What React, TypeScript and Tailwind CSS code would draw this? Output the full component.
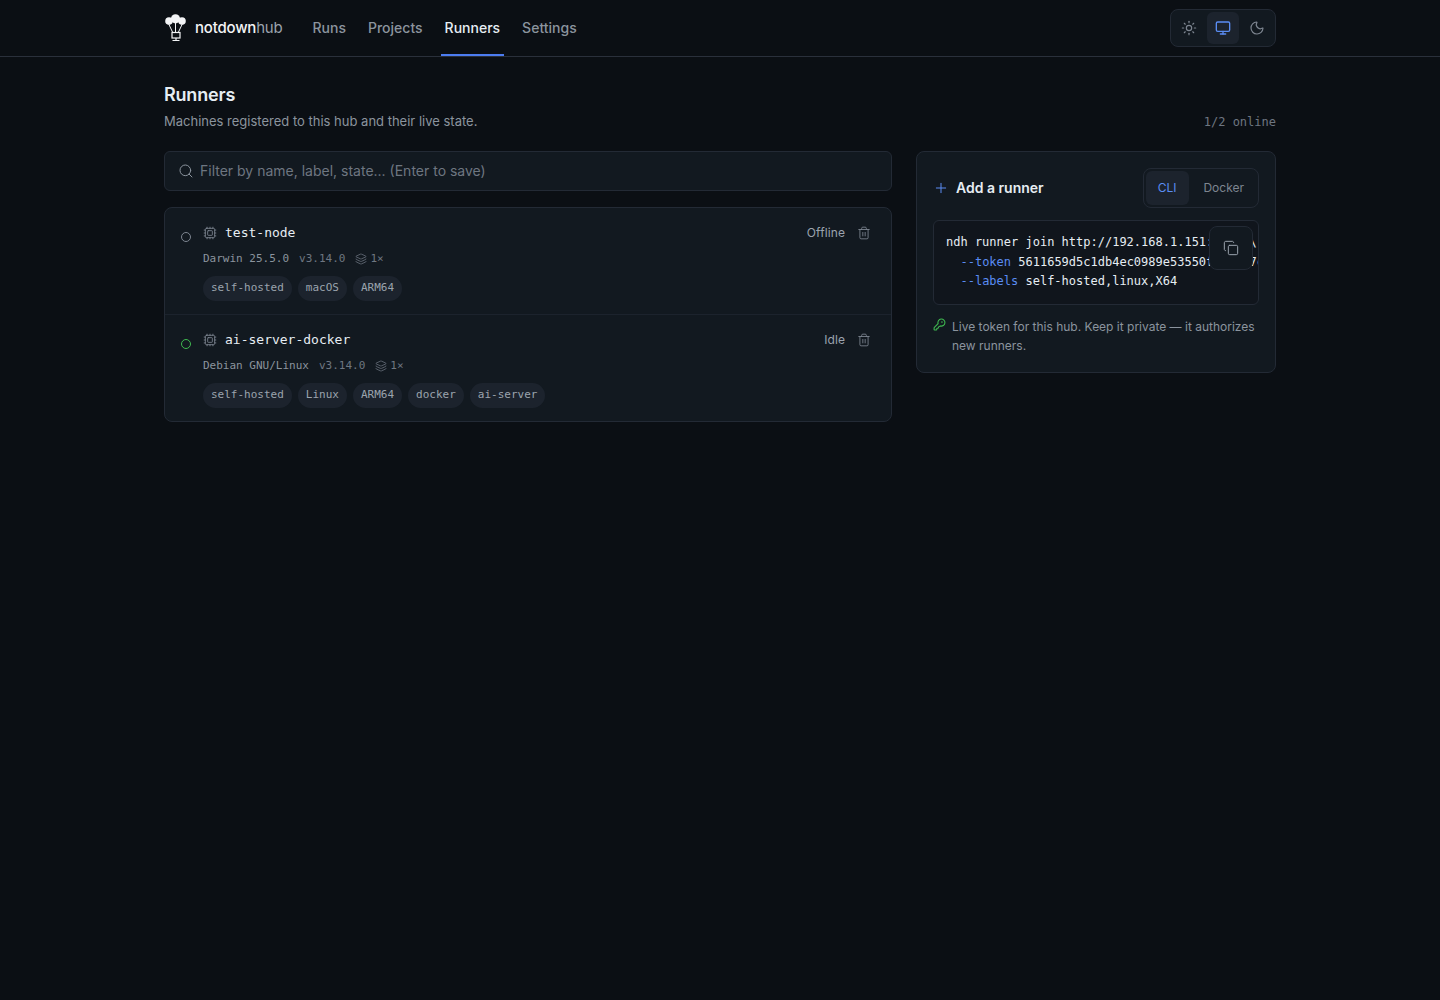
import { Copy, Cpu, KeyRound, Layers, Monitor, Moon, Plus, Search, Sun, Trash2 } from "lucide-react";

const mono = "font-['DejaVu_Sans_Mono','Liberation_Mono',monospace]";

const runners = [
  { name: "test-node", os: "Darwin 25.5.0", state: "Offline", online: false, labels: ["self-hosted", "macOS", "ARM64"] },
  { name: "ai-server-docker", os: "Debian GNU/Linux", state: "Idle", online: true, labels: ["self-hosted", "Linux", "ARM64", "docker", "ai-server"] },
];

function Logo() {
  return (
    <svg width="24" height="28" viewBox="0 0 24 28" fill="none">
      <path d="M4.5 9.5L8.5 18M11.5 8v10M18.5 9.5L14.5 18" stroke="#f3f4f6" strokeWidth="1" />
      <circle cx="5" cy="7" r="3.8" fill="#f3f4f6" />
      <circle cx="11.5" cy="4.8" r="4.6" fill="#f3f4f6" />
      <circle cx="18" cy="7" r="3.8" fill="#f3f4f6" />
      <rect x="8" y="18.5" width="8" height="5.5" stroke="#f3f4f6" strokeWidth="1.2" />
      <path d="M12 24v2M8.5 26.5h7" stroke="#f3f4f6" strokeWidth="1.2" />
    </svg>
  );
}

function RunnerRow({ runner }: { runner: (typeof runners)[number] }) {
  return (
    <div className="flex h-[107px] border-b border-[#1c232d] pl-4 pr-5 pt-4 last:h-[106px] last:border-b-0">
      <div className={`mr-3 mt-2 size-[10px] shrink-0 rounded-full border ${runner.online ? "border-[#3fb950]" : "border-[#7d8590]"}`} />
      <div className="min-w-0 flex-1">
        <div className="flex h-[17px] items-center justify-between">
          <div className="flex items-center gap-2">
            <Cpu size={14} strokeWidth={1.5} className="text-[#7d8590]" />
            <span className={`${mono} text-[13px] font-medium text-[#e6edf3]`}>{runner.name}</span>
          </div>
          <div className="flex items-center gap-3">
            <span className="text-xs tracking-[0.1px] text-[#9ba3ae]">{runner.state}</span>
            <Trash2 size={14} strokeWidth={1.5} className="text-[#7d8590]" />
          </div>
        </div>
        <div className={`${mono} mt-[10px] flex h-4 items-center text-[11px]`}>
          <span className="text-[#8b949e]">{runner.os}</span>
          <span className="ml-[10px] text-[#6e7681]">v3.14.0</span>
          <span className="ml-[10px] flex items-center gap-[3px] text-[#6e7681]">
            <Layers size={12} strokeWidth={1.5} />
            1×
          </span>
        </div>
        <div className="mt-[9px] flex gap-[6px]">
          {runner.labels.map((label) => (
            <span key={label} className={`${mono} flex h-[25px] items-center rounded-full bg-[#1c232d] px-2 text-[11px] text-[#9ba3ae]`}>
              {label}
            </span>
          ))}
        </div>
      </div>
    </div>
  );
}

export default function App() {
  return (
    <div className="min-h-[1000px] bg-[#0b0f14] font-['Inter',sans-serif] text-[#e6edf3] antialiased">
      <header className="h-[57px] border-b border-[#2a303b]">
        <div className="mx-auto flex h-[56px] w-[1112px] items-center justify-between">
          <div className="flex h-full items-center">
            <div className="flex items-center gap-[7px]">
              <Logo />
              <span className="text-[15px] font-medium tracking-[-0.2px] text-[#f3f4f6]">
                notdown<span className="font-normal text-[#9ba3ae]">hub</span>
              </span>
            </div>
            <nav className="ml-[26px] flex h-full gap-[14px] text-sm font-medium text-[#8b949e]">
              <a className="flex items-center px-1">Runs</a>
              <a className="flex items-center px-1">Projects</a>
              <a className="flex items-center border-y-2 border-t-transparent border-b-[#4c7cf0] px-1 text-[#e6edf3]">Runners</a>
              <a className="flex items-center px-1">Settings</a>
            </nav>
          </div>
          <div className="flex h-[38px] w-[106px] items-center gap-[2px] rounded-lg border border-[#232a35] bg-[#121920] p-[2px]">
            <span className="flex h-8 w-8 items-center justify-center text-[#7d8590]"><Sun size={16} strokeWidth={1.75} /></span>
            <span className="flex h-8 w-8 items-center justify-center rounded-md bg-[#1c232d] text-[#5a8cf2]"><Monitor size={16} /></span>
            <span className="flex h-8 w-8 items-center justify-center text-[#7d8590]"><Moon size={16} strokeWidth={1.75} /></span>
          </div>
        </div>
      </header>

      <main className="mx-auto w-[1112px] pt-[26px]">
        <h1 className="text-lg font-semibold leading-[24px] tracking-[-0.2px] text-[#e6edf3]">Runners</h1>
        <div className="mt-1 flex items-center justify-between">
          <p className="text-[13px] leading-5 text-[#8b949e]">Machines registered to this hub and their live state.</p>
          <span className={`${mono} pt-[2px] text-xs text-[#6e7681]`}>1/2 online</span>
        </div>

        <div className="mt-5 flex items-start gap-6">
          <div className="w-[728px]">
            <div className="flex h-10 items-center gap-[6px] rounded-md border border-[#232a35] bg-[#121920] px-[13px]">
              <Search size={16} strokeWidth={1.5} className="text-[#8b949e]" />
              <span className="text-sm text-[#6e7681]">Filter by name, label, state... (Enter to save)</span>
            </div>
            <div className="mt-4 rounded-lg border border-[#232a35] bg-[#121920]">
              {runners.map((runner) => (
                <RunnerRow key={runner.name} runner={runner} />
              ))}
            </div>
          </div>

          <aside className="h-[222px] w-[360px] rounded-lg border border-[#232a35] bg-[#121920] p-4">
            <div className="flex items-center justify-between">
              <div className="flex items-center gap-[7px]">
                <Plus size={16} strokeWidth={1.5} className="text-[#5a8cf2]" />
                <span className="text-sm font-semibold text-[#e6edf3]">Add a runner</span>
              </div>
              <div className="flex h-10 items-center gap-[3px] rounded-lg border border-[#232a35] py-[2px] pl-[2px] pr-[3px]">
                <span className="flex h-[34px] items-center rounded-md bg-[#1c232d] pl-3 pr-[13px] text-xs text-[#5a8cf2]">CLI</span>
                <span className="flex h-[34px] items-center pl-[11px] pr-[11px] text-xs text-[#7d8590]">Docker</span>
              </div>
            </div>
            <div className="relative mt-3 h-[85px] overflow-hidden rounded-md border border-[#232a35] bg-[#10151c]">
              <pre className={`${mono} overflow-hidden whitespace-pre px-3 py-3 text-xs leading-[19.5px] text-[#e6edf3]`}>
                {"ndh runner join http://192.168.1.151:3000 \\\n  "}
                <span className="text-[#5a8cf2]">--token</span>
                {" 5611659d5c1db4ec0989e53550f7a1ce7c0d4 \\\n  "}
                <span className="text-[#5a8cf2]">--labels</span>
                {" self-hosted,linux,X64"}
              </pre>
              <span className="absolute right-[5px] top-[5px] flex size-[44px] items-center justify-center rounded-lg border border-[#232a35] bg-[#121920] text-[#9ba3ae]">
                <Copy size={16} strokeWidth={1.5} />
              </span>
            </div>
            <div className="mt-3 flex gap-[6px]">
              <KeyRound size={13} className="mt-[1px] shrink-0 text-[#3fb950]" />
              <p className="text-xs leading-[19px] text-[#8b949e]">Live token for this hub. Keep it private — it authorizes new runners.</p>
            </div>
          </aside>
        </div>
      </main>
    </div>
  );
}
